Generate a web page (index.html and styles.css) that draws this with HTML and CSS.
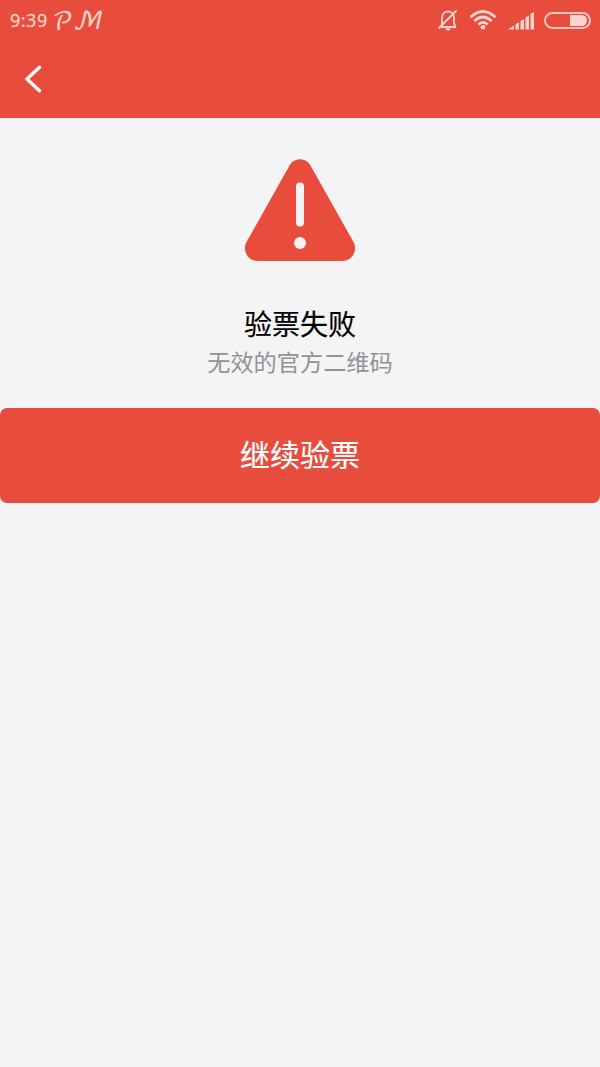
FILE: index.html
```html
<!DOCTYPE html>
<html lang="zh-CN">
<head>
<meta charset="UTF-8">
<meta name="viewport" content="width=device-width, initial-scale=1.0">
<title>验票失败</title>
<link rel="stylesheet" href="styles.css">
</head>
<body>
<header class="header">
    <div class="status-bar">
        <div class="time">9:39 <span class="period">𝒫ℳ</span></div>
        <div class="status-icons">
            <!-- Muted bell -->
            <svg class="bell" width="22" height="22" viewBox="0 0 22 22">
                <path d="M3.5 18H19M5 17.5V9C5 5 7.500 2.500 11 2.500S17 5 17 9V14L18.500 18M9 19.500Q11 21.500 13 19.500"/>
                <path d="M1.500 19.500L19.500 1.500"/>
            </svg>
            <!-- Wifi -->
            <svg class="wifi" width="28" height="20" viewBox="0 0 28 20">
                <path d="M1.500 7.200Q14 -4.200 26.500 7.200M5.300 11Q14 3 22.700 11M9.300 14.600Q14 10.200 18.700 14.600"/>
                <circle cx="14" cy="17.300" r="2.300"/>
            </svg>
            <!-- Signal -->
            <svg class="signal" width="27" height="19" viewBox="0 0 27 19">
                <path d="M0 18.500L6 14.500V18.500ZM7.500 13L11 11.500V18.500H7.500ZM12.500 10L16 8V18.500H12.500ZM17.500 6.500L21 4.500V18.500H17.500ZM22.500 3L26 .8V18.500H22.500Z"/>
            </svg>
            <div class="battery"><div class="battery-level"></div></div>
        </div>
    </div>
    <nav class="nav-bar">
        <a class="back-btn" aria-label="返回">
            <svg width="18" height="28" viewBox="0 0 18 28">
                <path d="M15.500 2.300L3 14L15.500 25.700"/>
            </svg>
        </a>
    </nav>
</header>
<main class="result">
    <svg class="warning" width="110" height="102" viewBox="0 0 110 102">
        <path class="triangle" d="M44.500 6.500C49 -1.800 61 -1.800 65.500 6.500L108.500 83C113 91 107.500 102 97.500 102H12.500C2.500 102 -3 91 1.500 83Z"/>
        <rect class="mark" x="51" y="23.500" width="8" height="44" rx="4"/>
        <circle class="mark" cx="55" cy="84" r="6"/>
    </svg>
    <h1 class="result-title">验票失败</h1>
    <p class="result-text">无效的官方二维码</p>
    <button class="continue-btn">继续验票</button>
</main>
</body>
</html>
```
FILE: styles.css
```css
/* Basic page styling */
body {
    margin: 0;
    min-height: 1067px;
    background-color: #f4f4f4;
    font-family: "Noto Sans CJK SC", sans-serif;
}
/* Header */
.header {
    height: 118px;
    background-color: #e84c3d;
}
.status-bar {
    display: flex;
    justify-content: space-between;
    align-items: center;
    height: 40px;
    padding: 0 9px 0 10px;
}
.time {
    display: flex;
    align-items: center;
    height: 39px;
    color: #fbd0c6;
    font-family: "Noto Sans", sans-serif;
    font-size: 18px;
    letter-spacing: .5px;
    -webkit-text-stroke: .3px #fbd0c6;
}
.period {
    margin: 4px 0 0 5px;
    font-family: "DejaVu Math TeX Gyre", "DejaVu Serif", serif;
    font-size: 24px;
    line-height: 24px;
    letter-spacing: 0;
    -webkit-text-stroke: .3px #fbd0c6;
}
.status-icons {
    display: flex;
    align-items: center;
}
.status-icons svg {
    fill: #fbd5cd;
}
.status-icons .bell {
    margin-right: 10px;
    fill: none;
    stroke: #fbd5cd;
    stroke-width: 1.8;
}
.wifi {
    margin-right: 11px;
}
.wifi path {
    fill: none;
    stroke: #fbd5cd;
    stroke-width: 2.7;
}
.signal {
    margin-right: 9px;
}
/* Battery */
.battery {
    box-sizing: border-box;
    width: 47px;
    height: 17px;
    margin-top: 1px;
    padding: 1px 2px;
    border: 2px solid #fbc5bb;
    border-radius: 9px;
}
.battery-level {
    width: 17px;
    height: 11px;
    margin-left: auto;
    background-color: #fbd5cd;
    border-radius: 0 6px 6px 0;
}
/* Navigation */
.nav-bar {
    display: flex;
    align-items: center;
    height: 77px;
    padding-left: 24px;
}
.back-btn svg {
    display: block;
    fill: none;
    stroke: #fff;
    stroke-width: 3.4;
    stroke-linecap: round;
    stroke-linejoin: round;
}
/* Result */
.result {
    display: flex;
    flex-direction: column;
    align-items: center;
    padding-top: 41px;
}
.triangle {
    fill: #e84c3d;
}
.mark {
    fill: #f4f4f4;
}
.result-title {
    margin: 42px 0 0;
    color: #000;
    font-size: 28px;
    font-weight: 400;
    line-height: 40px;
    -webkit-text-stroke: .2px #000;
}
.result-text {
    margin: 0;
    color: #929297;
    font-size: 23.2px;
    line-height: 36px;
}
.continue-btn {
    width: 100%;
    height: 95px;
    margin-top: 29px;
    padding: 0 0 5px;
    border: none;
    border-radius: 7px;
    background-color: #e84c3d;
    color: #fff;
    font-family: inherit;
    font-size: 30px;
    -webkit-text-stroke: .2px #fff;
}
```
